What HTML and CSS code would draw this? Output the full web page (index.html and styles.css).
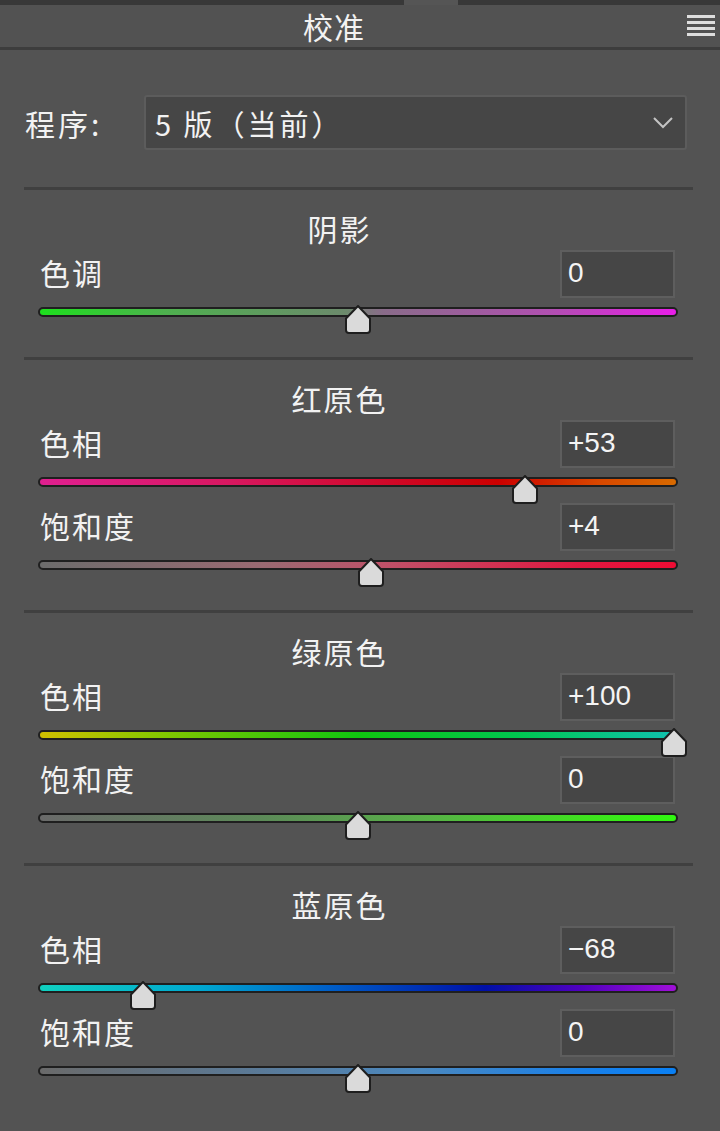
FILE: index.html
```html
<!DOCTYPE html>
<html lang="zh-CN">
<head>
    <meta charset="UTF-8">
    <meta name="viewport" content="width=device-width, initial-scale=1.0">
    <title>校准</title>
    <link rel="stylesheet" href="styles.css">
</head>
<body>
    <div class="panel">
        <div class="tabs">
            <div class="tab-dark tab-left"></div>
            <div class="tab-gap"></div>
            <div class="tab-dark tab-right"></div>
        </div>
        <div class="header">
            <h1 class="title">校准</h1>
            <svg class="menu" width="28" height="22" viewBox="0 0 28 22">
                <rect x="0" y="0" width="28" height="3" fill="#dedede"/>
                <rect x="0" y="6" width="28" height="3" fill="#dedede"/>
                <rect x="0" y="12" width="28" height="3" fill="#dedede"/>
                <rect x="0" y="18" width="28" height="3" fill="#dedede"/>
            </svg>
        </div>

        <div class="content">
            <div class="program">
                <label class="program-label">程序:</label>
                <div class="select">
                    <span>5 版（当前）</span>
                    <svg width="20" height="12" viewBox="0 0 20 12">
                        <polyline points="1,1 10,10 19,1" fill="none" stroke="#c4c4c4" stroke-width="2"/>
                    </svg>
                </div>
            </div>

            <div class="section">
                <h2 class="section-title">阴影</h2>
                <div class="row"><span class="label">色调</span><input class="value" type="text" value="0"></div>
                <div class="slider"><div class="track tint"></div><div class="thumbs"><svg class="thumb" style="left: 50%" width="30" height="29" viewBox="0 0 30 29"><path d="M15 1 L27 13.5 L27 25 Q27 28 24 28 L6 28 Q3 28 3 25 L3 13.5 Z" /></svg></div></div>
            </div>

            <div class="section">
                <h2 class="section-title">红原色</h2>
                <div class="row"><span class="label">色相</span><input class="value" type="text" value="+53"></div>
                <div class="slider"><div class="track red-hue"></div><div class="thumbs"><svg class="thumb" style="left: 76.5%" width="30" height="29" viewBox="0 0 30 29"><path d="M15 1 L27 13.5 L27 25 Q27 28 24 28 L6 28 Q3 28 3 25 L3 13.5 Z" /></svg></div></div>
                <div class="row second"><span class="label">饱和度</span><input class="value" type="text" value="+4"></div>
                <div class="slider"><div class="track red-sat"></div><div class="thumbs"><svg class="thumb" style="left: 52%" width="30" height="29" viewBox="0 0 30 29"><path d="M15 1 L27 13.5 L27 25 Q27 28 24 28 L6 28 Q3 28 3 25 L3 13.5 Z" /></svg></div></div>
            </div>

            <div class="section">
                <h2 class="section-title">绿原色</h2>
                <div class="row"><span class="label">色相</span><input class="value" type="text" value="+100"></div>
                <div class="slider"><div class="track green-hue"></div><div class="thumbs"><svg class="thumb" style="left: 100%" width="30" height="29" viewBox="0 0 30 29"><path d="M15 1 L27 13.5 L27 25 Q27 28 24 28 L6 28 Q3 28 3 25 L3 13.5 Z" /></svg></div></div>
                <div class="row second"><span class="label">饱和度</span><input class="value" type="text" value="0"></div>
                <div class="slider"><div class="track green-sat"></div><div class="thumbs"><svg class="thumb" style="left: 50%" width="30" height="29" viewBox="0 0 30 29"><path d="M15 1 L27 13.5 L27 25 Q27 28 24 28 L6 28 Q3 28 3 25 L3 13.5 Z" /></svg></div></div>
            </div>

            <div class="section">
                <h2 class="section-title">蓝原色</h2>
                <div class="row"><span class="label">色相</span><input class="value" type="text" value="&minus;68"></div>
                <div class="slider"><div class="track blue-hue"></div><div class="thumbs"><svg class="thumb" style="left: 16%" width="30" height="29" viewBox="0 0 30 29"><path d="M15 1 L27 13.5 L27 25 Q27 28 24 28 L6 28 Q3 28 3 25 L3 13.5 Z" /></svg></div></div>
                <div class="row second"><span class="label">饱和度</span><input class="value" type="text" value="0"></div>
                <div class="slider"><div class="track blue-sat"></div><div class="thumbs"><svg class="thumb" style="left: 50%" width="30" height="29" viewBox="0 0 30 29"><path d="M15 1 L27 13.5 L27 25 Q27 28 24 28 L6 28 Q3 28 3 25 L3 13.5 Z" /></svg></div></div>
            </div>
        </div>
    </div>
</body>
</html>
```

FILE: styles.css
```css
body { margin: 0; background: #535353; font-family: "Noto Sans CJK SC", "Noto Sans", sans-serif; color: #f2f2f2; }
.panel { width: 720px; min-height: 1131px; background: #535353; }

.tabs { display: flex; height: 5px; }
.tab-dark { background: #383838; }
.tab-left { width: 404px; }
.tab-gap { width: 54px; background: #555555; }
.tab-right { flex: 1; }

.header { display: flex; align-items: center; height: 42px; padding-right: 5px; border-bottom: 3px solid #3d3d3d; background: #525252; }
.title { flex: 1; margin: 0; font-size: 30px; font-weight: normal; line-height: 40px; text-align: center; letter-spacing: 1px; }
.menu { margin-left: 19px; }

.content { padding: 0 27px 0 24px; }

.program { display: flex; align-items: center; margin-top: 45px; height: 55px; padding-bottom: 37px; border-bottom: 3px solid #404040; }
.program-label { width: 119px; padding-left: 1px; font-size: 30px; letter-spacing: 3px; }
.select { flex: 1; display: flex; align-items: center; justify-content: space-between; height: 51px; margin-right: 6px; padding: 0 12px 0 9px; background: #464646; border: 2px solid #5c5c5c; border-radius: 3px; font-size: 29px; letter-spacing: 3px; }

.section { padding-top: 22px; padding-bottom: 31px; border-bottom: 3px solid #404040; }
.section:last-child { border-bottom: none; }
.section-title { margin: 0 38px 2px 0; font-size: 30px; font-weight: normal; line-height: 32px; padding-bottom: 4px; text-align: center; letter-spacing: 2px; }

.row { display: flex; align-items: center; justify-content: space-between; height: 48px; padding: 0 18px 0 16px; }
.row.second { margin-top: 7px; }
.label { font-size: 30px; line-height: 44px; padding-bottom: 4px; letter-spacing: 2px; }
.value { box-sizing: border-box; width: 115px; height: 48px; padding: 0 6px 2px; background: #464646; border: 2px solid #5e5e5e; color: #f4f4f4; font-family: "Liberation Sans", Arial, sans-serif; font-size: 28px; outline: none; }

.slider { position: relative; height: 28px; margin: 0 15px 0 14px; }
.track { position: absolute; left: 0; right: 0; top: 9px; height: 6px; border: 2px solid #1f1f1f; border-radius: 6px; }
.thumbs { position: absolute; left: 4px; right: 4px; top: 7px; height: 29px; }
.thumb { position: absolute; top: 0; margin-left: -15px; }
.thumb path { fill: #dadada; stroke: #1e1e1e; stroke-width: 2; }

.tint { background: linear-gradient(90deg, #1ee01e, #4fb04f 20%, #6c8a6c 48%, #8a6c8a 54%, #b050b0 80%, #e81ee8); }
.red-hue { background: linear-gradient(90deg, #e02090, #d81860 30%, #d00828 55%, #cc0000 72%, #d84800 88%, #d86a00); }
.red-sat { background: linear-gradient(90deg, #6c6c6c, #9a6a72 35%, #c05068 55%, #e01840 85%, #f00c34); }
.green-hue { background: linear-gradient(90deg, #d0c000, #80c800 20%, #10c810 50%, #00c850 75%, #10c0b0); }
.green-sat { background: linear-gradient(90deg, #6a6a6a, #5c8a58 35%, #58b048 60%, #40e020 85%, #30f810); }
.blue-hue { background: linear-gradient(90deg, #10d0c0, #00a8d0 25%, #0060c8 45%, #0010a8 70%, #5000c0 85%, #a010d8); }
.blue-sat { background: linear-gradient(90deg, #6a6a6a, #5a7a98 35%, #4a88c0 60%, #1a80e8 85%, #0a80f4); }
```
